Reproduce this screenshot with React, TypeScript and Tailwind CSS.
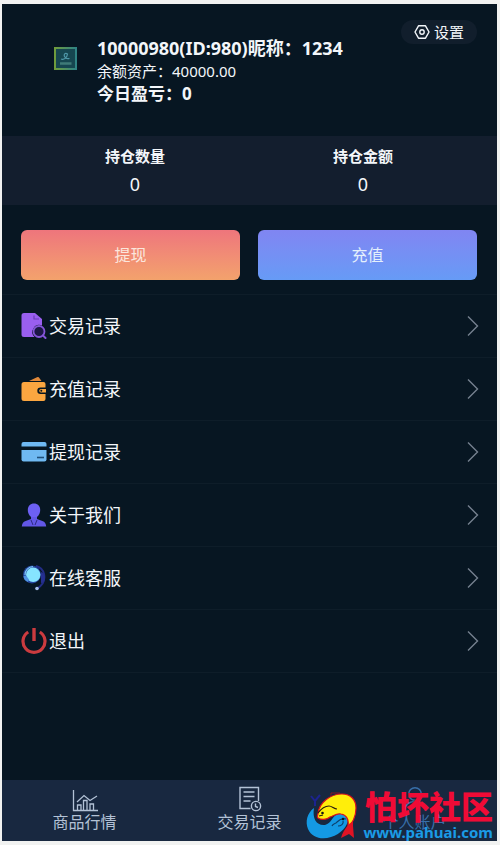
import type { ReactNode } from 'react'

const MENU: { label: string; icon: ReactNode }[] = [
  { label: '交易记录', icon: <RecordIcon /> },
  { label: '充值记录', icon: <WalletIcon /> },
  { label: '提现记录', icon: <CardIcon /> },
  { label: '关于我们', icon: <PersonIcon /> },
  { label: '在线客服', icon: <ServiceIcon /> },
  { label: '退出', icon: <PowerIcon /> },
]

const TABS: { label: string; icon: ReactNode; active?: boolean }[] = [
  { label: '商品行情', icon: <ChartIcon /> },
  { label: '交易记录', icon: <OrdersIcon /> },
  { label: '个人账户', icon: <AccountIcon />, active: true },
]

function RecordIcon() {
  return (
    <svg viewBox="0 0 26 26" className="h-[26px] w-[26px]" aria-hidden="true">
      <path d="M3 0h11l7 6v6.500a7 7 0 0 0-7.500 11.500H3a2.500 2.500 0 0 1-2.500-2.500v-19A2.500 2.500 0 0 1 3 0z" fill="#9a5ff0" />
      <path d="M13 2.500v3.500h5" fill="none" stroke="#6a3fb8" strokeWidth="1.200" />
      <circle cx="18" cy="18.500" r="5.500" fill="#1c1745" stroke="#8455d8" strokeWidth="1.800" />
      <path d="M22 22.500l2.500 2.500" stroke="#8455d8" strokeWidth="2" strokeLinecap="round" />
    </svg>
  )
}

function WalletIcon() {
  return (
    <svg viewBox="0 0 26 26" className="h-[26px] w-[26px]" aria-hidden="true">
      <path d="M8 5l8-3.700a2 2 0 0 1 2.500.9L20.500 5z" fill="#e0893a" />
      <path d="M3 6h19.500a2 2 0 0 1 2 2v3.500h-5a3.200 3.200 0 0 0 0 6.400h5V23a2 2 0 0 1-2 2H3a2.500 2.500 0 0 1-2.500-2.500v-14A2.500 2.500 0 0 1 3 6z" fill="#fba640" />
      <path d="M25 13h-5a1.800 1.800 0 0 0 0 3.600h5z" fill="#fba640" />
      <circle cx="20.300" cy="14.800" r="1" fill="#08131e" />
    </svg>
  )
}

function CardIcon() {
  return (
    <svg viewBox="0 0 26 26" className="h-[26px] w-[26px]" aria-hidden="true">
      <path d="M2.500 3h21a2 2 0 0 1 2 2v2.500H.5V5a2 2 0 0 1 2-2z" fill="#6fb9f2" />
      <path d="M.5 11h25v9.500a2 2 0 0 1-2 2h-21a2 2 0 0 1-2-2z" fill="#6fb9f2" />
      <path d="M16 18.500h7" stroke="#1e4f7a" strokeWidth="1.600" />
    </svg>
  )
}

function PersonIcon() {
  return (
    <svg viewBox="0 0 26 26" className="h-[26px] w-[26px]" aria-hidden="true">
      <path d="M13 1.500c3.700 0 6.200 2.600 6.200 6.500S16.500 16 13 16 6.800 12 6.800 8 9.300 1.500 13 1.500z" fill="#6d60f3" />
      <path d="M10 15h6v2l6 2.200c2 .8 3 2.800 3.200 5.300H.8c.2-2.500 1.200-4.500 3.200-5.300l6-2.200z" fill="#6257e6" />
      <path d="M10 18l2 5M16 18l-2 5" fill="none" stroke="#2c2a80" strokeWidth="1" />
    </svg>
  )
}

function ServiceIcon() {
  return (
    <svg viewBox="0 0 26 26" className="h-[26px] w-[26px]" aria-hidden="true">
      <path d="M15 1c4 1 7 4 8 8 1.200 6-1.500 11.500-7 14.500" fill="none" stroke="#222c86" strokeWidth="2" />
      <path d="M20 7c3 1 4 4 3.500 7.500-.3 2-1.500 3.500-3.500 3.500z" fill="#252f90" />
      <circle cx="11" cy="9.500" r="9" fill="#24449c" />
      <ellipse cx="12.200" cy="9.800" rx="7.200" ry="7.200" fill="#86e4ff" />
      <path d="M4 10a8 8 0 0 1 8-8.300" fill="none" stroke="#7cc6f6" strokeWidth="1.200" />
      <path d="M2.500 11c0 3 1.500 5 4.500 6l1-2.500L5 10.500z" fill="#4f93e2" />
      <circle cx="16" cy="23.500" r="1.800" fill="#a5bde8" />
    </svg>
  )
}

function PowerIcon() {
  return (
    <svg viewBox="0 0 26 26" className="h-[26px] w-[26px]" aria-hidden="true">
      <path d="M7.200 4A11 11 0 1 0 18.800 4" fill="none" stroke="#cb3b3f" strokeWidth="3.200" />
      <path d="M13 0v13" stroke="#cb3b3f" strokeWidth="3.400" />
    </svg>
  )
}

function ChartIcon() {
  return (
    <svg viewBox="0 0 26 24" className="h-6 w-[26px]" fill="none" stroke="currentColor" strokeWidth="1.300" aria-hidden="true">
      <path d="M1.500 2v20.500H26" />
      <path d="M5 14l7-6.500 6 5L25 8" />
      <path d="M5.500 22v-5h3.500v5M11.500 22V12.500H15V22M18 22v-6h3.500v6" />
    </svg>
  )
}

function OrdersIcon() {
  return (
    <svg viewBox="0 0 24 26" className="h-[26px] w-6" fill="none" stroke="currentColor" strokeWidth="1.400" aria-hidden="true">
      <path d="M12.500 22.500H2V1.500h18.500V15" />
      <path d="M5.500 6h11M5.500 10.500h11M5.500 15h7" />
      <circle cx="18" cy="20" r="4.600" />
      <path d="M17.500 17.500v3l2.500 1" />
    </svg>
  )
}

function AccountIcon() {
  return (
    <svg viewBox="0 0 26 26" className="h-[26px] w-[26px]" fill="none" stroke="currentColor" strokeWidth="1.500" aria-hidden="true">
      <circle cx="13" cy="8" r="6.300" />
      <path d="M2.500 25c.5-6 4.500-9.500 10.500-9.500S23 19 23.500 25" />
    </svg>
  )
}

function Chevron() {
  return (
    <svg viewBox="0 0 12 22" className="h-[22px] w-3" fill="none" stroke="#76818f" strokeWidth="1.400" aria-hidden="true">
      <path d="M1 1.500l9.500 9.500L1 20.500" />
    </svg>
  )
}

function Avatar() {
  return (
    <svg viewBox="0 0 24 24" className="h-6 w-6" role="img" aria-label="头像">
      <defs>
        <linearGradient id="avatarEdge" x1="0" y1="0" x2="1" y2="0">
          <stop offset="0" stopColor="#6f9c3c" />
          <stop offset="1" stopColor="#2f8385" />
        </linearGradient>
      </defs>
      <rect x="2" y="2" width="21" height="21" fill="#164650" stroke="url(#avatarEdge)" strokeWidth="2" />
      <path d="M8 13c3 1 6-1 6.500-5-2.500-1.500-4 .5-3 2.500s3 2.500 5 2" fill="none" stroke="#4f98a8" strokeWidth="1.200" />
      <path d="M7 17.500h11.500" stroke="#3f7b78" strokeWidth="2.500" />
    </svg>
  )
}

function FishLogo() {
  return (
    <svg viewBox="0 0 54 49" className="h-[49px] w-[54px] shrink-0" aria-hidden="true">
      <path d="M6 4l4 5 5-6M10 9v5" fill="none" stroke="#1c2391" strokeWidth="2" />
      <path d="M26 4V1h9" fill="none" stroke="#8a1424" strokeWidth="1" />
      <path d="M9 16C2 21 0 30 3 37c4 9 14 11 23 8 10-3 17-11 17-18 0-6-6-7-10-5-6 2-6 9-13 11-8 1-13-6-11-17z" fill="#1499e4" />
      <path d="M13 22C14 10 26 2 37 2c9 0 14 6 14 14 0 9-4 16-8 19 1-7-1-12-7-13-5-1-7 2-11 3-3 3-9 3-12 1-1-1-1-2 0-4z" fill="#ffee0a" stroke="#d8121e" strokeWidth="1.200" />
      <path d="M13 21c3-4 6-7 11-7 3 0 5 3 8 3M14 24l4-1" fill="none" stroke="#2a1a10" strokeWidth="1.200" />
      <circle cx="17.500" cy="21" r="1.300" fill="#151515" />
      <path d="M27 34c1-3 4-2 5-4 2-2 5-4 9-3M38 29c1 3-2 5-5 5" fill="none" stroke="#0c3f6c" strokeWidth="1.200" />
      <circle cx="38" cy="27" r="1.300" fill="#071722" />
      <path d="M44 32l4-3 0 5 1 12-5-4-8 4c1-5 4-9 8-14z" fill="#e01324" />
    </svg>
  )
}

function Stat({ label, value }: { label: string; value: string }) {
  return (
    <div className="flex-1 pt-2 text-center">
      <p className="text-[15px] leading-6 font-bold">{label}</p>
      <p className="text-lg leading-8">{value}</p>
    </div>
  )
}

export default function App() {
  return (
    <div className="bg-[#f1f2f1] pt-1 pr-[3px] pb-1 pl-0.5 font-['Noto_Sans','Noto_Sans_CJK_SC',sans-serif] text-[#f3f6fa]">
      <div className="relative bg-[#071622]">
        <header className="flex h-[132px] items-start justify-between">
          <div className="flex pt-8">
            <div className="w-[95px] pt-2.5 pl-[51px]">
              <Avatar />
            </div>
            <div className="whitespace-nowrap">
              <h1 className="text-lg leading-6 font-bold">10000980(ID:980)昵称：1234</h1>
              <p className="text-[15px] leading-[22px]">余额资产：40000.00</p>
              <p className="text-[17px] leading-6 font-bold">今日盈亏：0</p>
            </div>
          </div>
          <button className="mt-4 mr-5 flex h-6 w-[76px] shrink-0 items-center justify-center gap-1 rounded-full bg-[#111e2c] text-[15px]">
            <svg viewBox="0 0 16 16" className="h-4 w-4" fill="none" stroke="currentColor" strokeWidth="1.400" aria-hidden="true">
              <path d="M4.500 1.800h7L15 8l-3.500 6.200h-7L1 8z" strokeLinejoin="round" />
              <circle cx="8" cy="8" r="2.200" />
            </svg>
            设置
          </button>
        </header>

        <section className="flex h-[69px] bg-[#131e2e] pr-5 pl-[19px]">
          <Stat label="持仓数量" value="0" />
          <Stat label="持仓金额" value="0" />
        </section>

        <div className="flex gap-[18px] pt-[25px] pr-5 pb-3.5 pl-[19px]">
          <button className="h-[50px] flex-1 rounded-md bg-linear-to-b from-[#ee757c] to-[#f3a26c] text-base text-[#fbe6dc]">提现</button>
          <button className="h-[50px] flex-1 rounded-md bg-linear-to-b from-[#8085f2] to-[#669bf6] text-base text-[#e4f0fc]">充值</button>
        </div>

        <nav className="pb-[107px]">
          {MENU.map((item) => (
            <a
              key={item.label}
              href="#"
              className="flex h-[63px] items-center border-t border-[#0e1d29] pr-[18px] pl-[19px] last:h-16 last:border-b"
            >
              {item.icon}
              <span className="ml-0.5 flex-1 text-lg">{item.label}</span>
              <Chevron />
            </a>
          ))}
        </nav>

        <footer className="flex h-[61px] bg-[#182840] text-[#b3c2d6]">
          {TABS.map((tab) => (
            <a
              key={tab.label}
              href="#"
              className={`flex flex-1 flex-col items-center pt-1.5 ${tab.active ? 'text-[#386fa9]' : ''}`}
            >
              <span className="flex h-[26px] items-end">{tab.icon}</span>
              <span className="text-base leading-5">{tab.label}</span>
            </a>
          ))}
        </footer>

        {/* site mark floats above the tab bar */}
        <div className="pointer-events-none absolute right-1 bottom-0 flex items-end whitespace-nowrap">
          <FishLogo />
          <div className="ml-1">
            <p className="text-right text-[32px] leading-8 font-black text-[#f00b36]">怕坏社区</p>
            <p className="text-[15px] leading-[18px] font-bold text-[#1b9be6]">www.pahuai.com</p>
          </div>
        </div>
      </div>
    </div>
  )
}
